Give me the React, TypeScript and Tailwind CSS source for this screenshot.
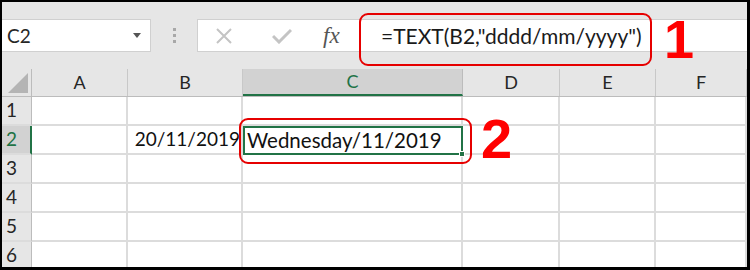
import React from "react";

const cols = [
  { k: "A", w: 96 },
  { k: "B", w: 115 },
  { k: "C", w: 220 },
  { k: "D", w: 97 },
  { k: "E", w: 96 },
  { k: "F", w: 91 },
];
const rows = [1, 2, 3, 4, 5, 6];

export default function App() {
  const font = { fontFamily: "Lato, 'Open Sans', sans-serif" };
  return (
    <div className="w-[750px] h-[270px] bg-black pt-[2px] pl-[2px] pr-[3px] pb-[3px]" style={font}>
      <div className="relative w-full h-full bg-[#e6e6e6] flex flex-col overflow-hidden">
        {/* toolbar */}
        <div className="h-[67px] shrink-0 pt-[17px] flex items-start">
          <div className="w-[149px] h-[33px] bg-white border-y border-r border-[#d0d0d0] flex items-center justify-between pl-[5px] pr-[9px]">
            <span className="text-[19px] text-[#262626] leading-none">C2</span>
            <svg width="8" height="5" viewBox="0 0 8 5"><path d="M0 0 L8 0 L4 5 Z" fill="#555" /></svg>
          </div>
          <div className="w-[46px] h-[33px] flex flex-col items-center justify-center gap-[3px]">
            <div className="w-[3px] h-[3px] bg-[#a8a8a8]" />
            <div className="w-[3px] h-[3px] bg-[#a8a8a8]" />
            <div className="w-[3px] h-[3px] bg-[#a8a8a8]" />
          </div>
          <div className="flex-1 h-[33px] bg-white border-y border-l border-[#d0d0d0] flex items-center">
            <div className="w-[162px] h-full flex items-center border-r border-[#d0d0d0]">
              <svg className="ml-[18px]" width="16" height="16" viewBox="0 0 16 16">
                <path d="M1 1 L15 15 M15 1 L1 15" stroke="#c4c4c4" strokeWidth="2" />
              </svg>
              <svg className="ml-[40px]" width="20" height="16" viewBox="0 0 20 16">
                <path d="M1 8 L7 14 L19 2" stroke="#c4c4c4" strokeWidth="3" fill="none" />
              </svg>
              <span
                className="ml-[31px] text-[23px] italic text-[#555] leading-none"
                style={{ fontFamily: "'Liberation Serif', serif" }}
              >
                fx
              </span>
            </div>
            <span className="ml-[21px] text-[21px] text-[#1a1a1a] leading-none">=TEXT(B2,"dddd/mm/yyyy")</span>
          </div>
        </div>

        {/* grid */}
        <div className="flex-1 bg-white">
          <div className="flex h-[28px] bg-[#e6e6e6] border-b border-[#bcbcbc]">
            <div className="w-[30px] h-full border-r border-[#bcbcbc] flex items-end justify-end pr-[3px] pb-[3px]">
              <svg width="20" height="20" viewBox="0 0 20 20"><path d="M20 0 L20 20 L0 20 Z" fill="#b4b4b4" /></svg>
            </div>
            {cols.map((c) => (
              <div
                key={c.k}
                style={{ width: c.w }}
                className={
                  c.k === "C"
                    ? "h-full bg-[#d2d2d2] border-r border-[#bcbcbc] border-b-2 border-b-[#217346] flex items-center justify-center text-[18px] text-[#217346]"
                    : "h-full border-r border-[#c8c8c8] flex items-center justify-center text-[18px] text-[#262626]"
                }
              >
                {c.k}
              </div>
            ))}
          </div>
          {rows.map((r) => (
            <div key={r} className="flex h-[29px]">
              <div
                className={
                  r === 2
                    ? "w-[30px] h-full bg-[#d2d2d2] border-r-2 border-[#217346] border-b-2 border-b-[#dcdcdc] flex items-center pl-[4px] text-[19px] text-[#217346]"
                    : "w-[30px] h-full bg-[#e6e6e6] border-r border-[#bcbcbc] border-b-2 border-b-[#dcdcdc] flex items-center pl-[4px] text-[19px] text-[#262626]"
                }
              >
                {r}
              </div>
              {cols.map((c) => {
                const sel = r === 2 && c.k === "C";
                return (
                  <div
                    key={c.k}
                    style={{ width: c.w }}
                    className={
                      sel
                        ? "relative h-full border-2 border-[#217346] flex items-center pl-[2px] text-[20.5px] text-[#111]"
                        : "h-full border-r-2 border-b-2 border-[#dcdcdc] flex items-center justify-end pr-[1px] text-[19px] text-[#111]"
                    }
                  >
                    {r === 2 && c.k === "B" ? "20/11/2019" : ""}
                    {sel ? (
                      <>
                        <span>Wednesday/11/2019</span>
                        <div className="absolute right-[-4px] bottom-[-4px] w-[6px] h-[6px] bg-[#217346] border border-white" />
                      </>
                    ) : null}
                  </div>
                );
              })}
            </div>
          ))}
        </div>

        {/* annotations */}
        <div className="absolute left-[357px] top-[11px] w-[293px] h-[53px] border-2 border-[#e60000] rounded-[9px]" />
        <div
          className="absolute left-[662px] top-[10px] text-[54px] font-bold text-[#ff0000] leading-none"
          style={{ fontFamily: "'Liberation Sans', Arial, sans-serif" }}
        >
          1
        </div>
        <div className="absolute left-[237px] top-[116px] w-[233px] h-[46px] border-2 border-[#e60000] rounded-[9px]" />
        <div
          className="absolute left-[479px] top-[109px] text-[56px] font-bold text-[#ff0000] leading-none"
          style={{ fontFamily: "'Liberation Sans', Arial, sans-serif" }}
        >
          2
        </div>
      </div>
    </div>
  );
}
